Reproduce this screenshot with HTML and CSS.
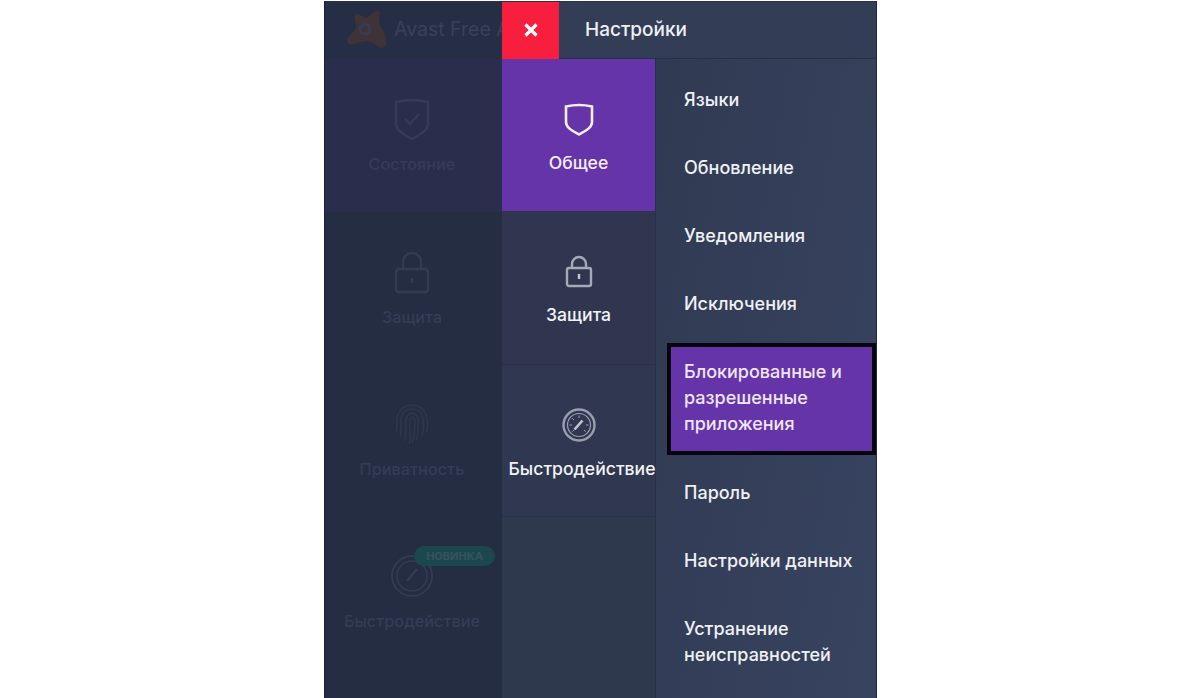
FILE: index.html
```html
<!DOCTYPE html>
<html lang="ru">
<head>
<meta charset="utf-8">
<title>Настройки</title>
<link rel="stylesheet" href="styles.css">
</head>
<body>
<div class="app">
  <aside class="base">
    <div class="brand">
      <svg class="logo" viewBox="0 0 42 42"><path d="M11 6c3-1 6 3 9 4 4 0 8-7 13-7 3 1 1 6 1 10 0 5 7 10 7 22 0 4-4 6-7 4-4-3-8-6-13-6-5 0-13 5-17 3-3-2-2-6 1-9 3-3 6-5 6-9 0-4-3-10 0-12z" fill="#3f3338"/><circle cx="20" cy="21" r="5" fill="none" stroke="#333d58" stroke-width="3"/></svg>
      <span class="brand-name">Avast Free Antivirus</span>
    </div>
    <div class="base-item base-active">
      <svg class="base-icon" viewBox="0 0 36 44" fill="none" stroke="#363c56" stroke-width="2.400"><path d="M2 5Q18 1 34 5V27C34 33 26 38 18 42 10 38 2 33 2 27z"/><path d="M11 22l5 5 9-10"/></svg>
      <span>Состояние</span>
    </div>
    <div class="base-item">
      <svg class="base-icon" viewBox="0 0 36 44" fill="none" stroke="#343c54" stroke-width="2.400"><rect x="2" y="19" width="32" height="23" rx="3"/><path d="M9 19v-7a9 9 0 0 1 18 0v7"/><path d="M18 28v5"/></svg>
      <span>Защита</span>
    </div>
    <div class="base-item">
      <svg class="base-icon" viewBox="0 0 36 44" fill="none" stroke="#2e374d" stroke-width="1.500"><path d="M2 30C4 24 2 20 3 16 5 8 11 3 18 3s13 5 15 13c1 5 1 9 0 14"/><path d="M6 35c2-6 0-12 1-18 1-6 5-10 11-10s10 4 11 10c1 6 1 11-1 17"/><path d="M10 39c3-6 1-15 2-21 1-4 3-7 6-7s6 3 6 7c1 7 0 14-2 20"/><path d="M15 42c3-7 0-17 1-23 0-2 1-4 2-4s3 2 3 4c0 7 0 15-3 22"/></svg>
      <span>Приватность</span>
    </div>
    <div class="base-item">
      <svg class="base-icon gauge" viewBox="0 0 44 44" fill="none" stroke="#343b52" stroke-width="2"><circle cx="22" cy="22" r="20"/><circle cx="22" cy="22" r="15" stroke-width="1.500"/><path d="M17 27l10-12" stroke-width="2.500"/></svg>
      <span>Быстродействие</span>
      <b class="tag">НОВИНКА</b>
    </div>
  </aside>

  <div class="panel">
    <header class="top">
      <button class="close">
        <svg viewBox="0 0 14 14" stroke="#fff" stroke-width="3.200" fill="none"><path d="M1.500 1.500l11 11M12.500 1.500l-11 11"/></svg>
      </button>
      <h1>Настройки</h1>
    </header>
    <div class="body">
      <nav class="cats">
        <div class="cat cat-active">
          <svg class="cat-icon" viewBox="0 0 34 34" fill="none" stroke="#f4eefa" stroke-width="2.600"><path d="M4 4.500Q17 1.500 30 4.500V20C30 26 23 29 17 32.500 11 29 4 26 4 20z"/></svg>
          <span>Общее</span>
        </div>
        <div class="cat cat-tall">
          <svg class="cat-icon" viewBox="0 0 30 34" fill="none" stroke="#a5a9b8" stroke-width="2.400"><rect x="3" y="14" width="24" height="18" rx="2"/><path d="M8 14V10a7 7 0 0 1 14 0v4"/><path d="M15 20v5" stroke="#c8cad3"/></svg>
          <span>Защита</span>
        </div>
        <div class="cat cat-short">
          <svg class="cat-icon" viewBox="0 0 34 34" fill="none" stroke="#9a9fb0" stroke-width="2.400"><circle cx="17" cy="17" r="15.500"/><circle cx="17" cy="17" r="11.500" stroke-width="1.200"/><path d="M12.500 21.500l8-9" stroke-width="2.600" stroke="#c2c5d0"/><path d="M17 7.500v2.500M7.500 17H10M26.500 17H24M10.300 10.300l1.700 1.700M23.700 23.700L22 22M10.300 23.700l1.700-1.700" stroke-width="1"/></svg>
          <span class="cat-wide">Быстродействие</span>
        </div>
        <div class="cat-rest"></div>
      </nav>
      <ul class="menu">
        <li>Языки</li>
        <li>Обновление</li>
        <li>Уведомления</li>
        <li>Исключения</li>
        <li class="selected">Блокированные и разрешенные приложения</li>
        <li>Пароль</li>
        <li>Настройки данных</li>
        <li>Устранение неисправностей</li>
      </ul>
    </div>
  </div>
</div>
</body>
</html>
```
FILE: styles.css
```css
* { box-sizing: border-box; }
html, body { margin: 0; height: 100%; background: #fff; overflow: hidden; }
body { display: flex; justify-content: center; padding-top: 1px; font-family: Inter, "Open Sans", "Liberation Sans", sans-serif; }
.app {
  display: flex;
  width: 553px;
  height: 697px;
  margin-left: 1px;
  border-left: 1px solid #15204a;
  border-right: 1px solid #1e2a44;
  border-top: 1px solid #2a3046;
  overflow: hidden;
}
.base {
  width: 177px;
  flex: none;
  display: flex;
  flex-direction: column;
  overflow: hidden;
  background: #242d42;
}
.brand {
  height: 57px;
  flex: none;
  display: flex;
  align-items: center;
  gap: 7px;
  padding: 0 0 3px 20px;
  background: #262e45;
  white-space: nowrap;
}
.logo { width: 42px; height: 42px; flex: none; }
.brand-name { font-size: 19.500px; color: #3a4159; }
.base-item {
  position: relative;
  height: 152px;
  display: flex;
  flex-direction: column;
  align-items: center;
  padding: 38px 3px 0 0;
  flex: none;
  font-size: 16.300px;
  font-weight: 500;
  color: #363c56;
}
.base-active { height: 153px; background: #2a2e4c; }
.base-icon { width: 36px; height: 44px; margin-bottom: 13px; }
.gauge { width: 44px; }
.base-item .tag {
  position: absolute;
  left: 89px;
  top: 30px;
  width: 81px;
  height: 20px;
  line-height: 20px;
  text-align: center;
  border-radius: 10px;
  background: #1b484f;
  color: #35545e;
  font-size: 11px;
  font-weight: 700;
}
.panel { flex: 1; display: flex; flex-direction: column; min-width: 0; }
.top {
  height: 57px;
  flex: none;
  display: flex;
  align-items: center;
  background: #333d56;
  border-bottom: 1px solid #27304a;
}
.close {
  width: 57px;
  height: 57px;
  flex: none;
  border: 0;
  padding: 0;
  display: flex;
  align-items: center;
  justify-content: center;
  background: #f81f3e;
}
.close svg { width: 14px; height: 14px; }
.top h1 {
  margin: 0 0 1px 26px;
  font-size: 19px;
  font-weight: 500;
  color: #eef0f4;
}
.body { flex: 1; display: flex; min-height: 0; }
.cats {
  width: 154px;
  flex: none;
  display: flex;
  flex-direction: column;
  background: #2e394e;
  border-right: 1px solid #27304a;
}
.cat {
  height: 153px;
  flex: none;
  display: flex;
  flex-direction: column;
  align-items: center;
  padding-top: 43px;
  border-bottom: 1px solid #282f47;
  font-size: 17.600px;
  font-weight: 500;
  color: #f2f3f6;
  white-space: nowrap;
  background: #30364f;
}
.cat-tall { height: 154px; }
.cat-short { height: 152px; background: #2f3850; }
.cat-active { height: 152px; width: 153px; background: #6534a8; border-bottom: 0; color: #f4eefa; }
.cat-icon { width: 34px; height: 34px; margin-bottom: 16px; }
.cat-wide { margin-left: 7px; }
.cat-rest { flex: 1; }
.menu {
  flex: 1;
  list-style: none;
  margin: 0;
  padding: 0 0 0 11px;
  display: flex;
  flex-direction: column;
  background: linear-gradient(100deg, #303a52, #384360);
}
.menu li {
  padding: 28px 10px 0 17px;
  height: 68px;
  font-size: 18px;
  font-weight: 500;
  line-height: 26px;
  color: #f0f1f5;
  flex: none;
}
.menu .selected {
  height: 112px;
  margin-top: 12px;
  margin-bottom: -3px;
  padding: 12px 6px 0 13px;
  background: #6534a8;
  border: 4px solid #06040c;
  color: #efe6f8;
}
```
